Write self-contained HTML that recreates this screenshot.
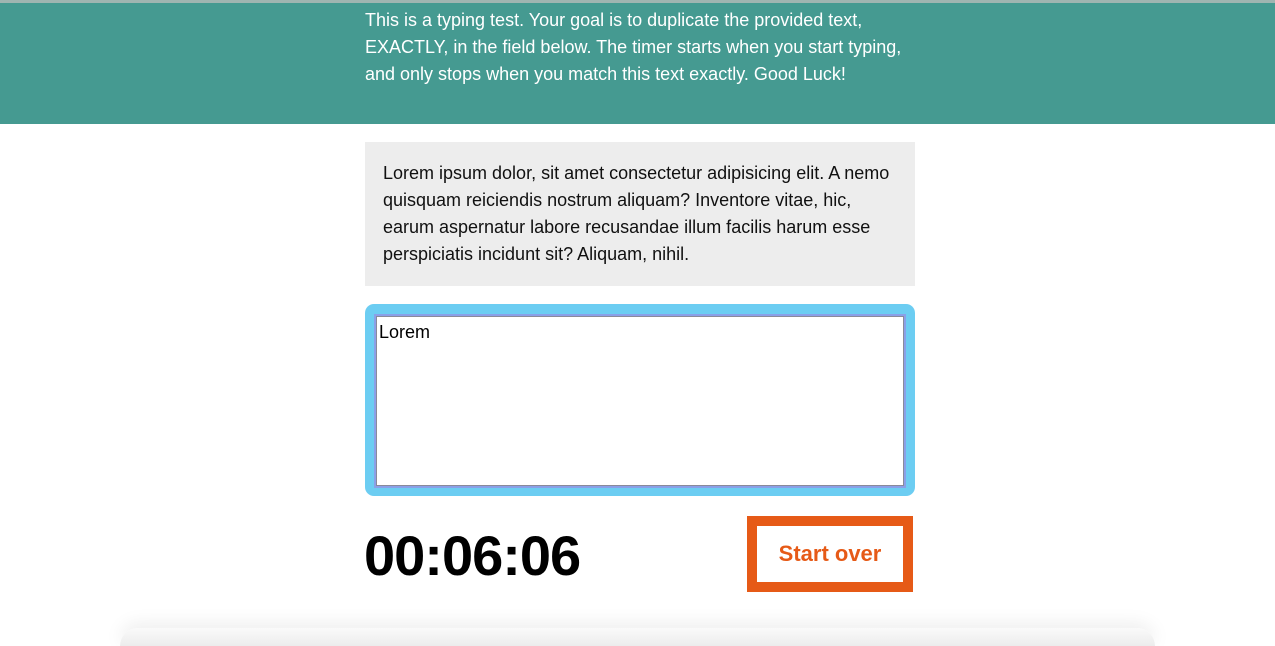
<!DOCTYPE html>
<html><head><style>
html,body{margin:0;width:1275px;height:646px;overflow:hidden}
body{background:#fff;font-family:"Liberation Sans",Arial,sans-serif;position:relative}
.top{position:absolute;left:0;top:0;width:1275px;height:3px;background:#9fb5b1}
header{position:absolute;left:0;top:3px;width:1275px;height:121px;background:#459a91}
header p{position:absolute;left:365px;top:4px;width:550px;margin:0;color:#fff;font-size:18px;line-height:27px}
.orig{position:absolute;left:365px;top:142px;width:514px;height:108px;padding:18px;background:#ededed;font-size:18px;line-height:27px;color:#111}
.wrap{position:absolute;left:365px;top:304px;width:550px;height:192px;background:#6ccdf2;border-radius:9px}
.ta{position:absolute;left:11px;top:12px;width:526px;height:168px;background:#fff;border:1px solid #8a8a9a;box-shadow:0 0 0 2px #8aa0e8}
.ta span{position:absolute;left:2px;top:5px;font-size:18px}
.timer{position:absolute;left:364px;top:523px;font-size:56px;font-weight:bold;letter-spacing:-1px}
.btn{position:absolute;left:747px;top:516px;width:146px;height:56px;border:10px solid #e65a17;color:#e65a17;font-weight:bold;font-size:22px;text-align:center;line-height:56px}
.sh{position:absolute;left:120px;top:628px;width:1035px;height:18px;border-radius:20px 20px 0 0;box-shadow:0 -4px 18px rgba(0,0,0,.08);background:linear-gradient(#fafafa,#ececec)}
</style></head><body>
<div class="top"></div>
<header><p>This is a typing test. Your goal is to duplicate the provided text, EXACTLY, in the field below. The timer starts when you start typing, and only stops when you match this text exactly. Good Luck!</p></header>
<div class="orig">Lorem ipsum dolor, sit amet consectetur adipisicing elit. A nemo quisquam reiciendis nostrum aliquam? Inventore vitae, hic, earum aspernatur labore recusandae illum facilis harum esse perspiciatis incidunt sit? Aliquam, nihil.</div>
<div class="wrap"><div class="ta"><span>Lorem</span></div></div>
<div class="timer">00:06:06</div>
<div class="btn">Start over</div>
<div class="sh"></div>
</body></html>
